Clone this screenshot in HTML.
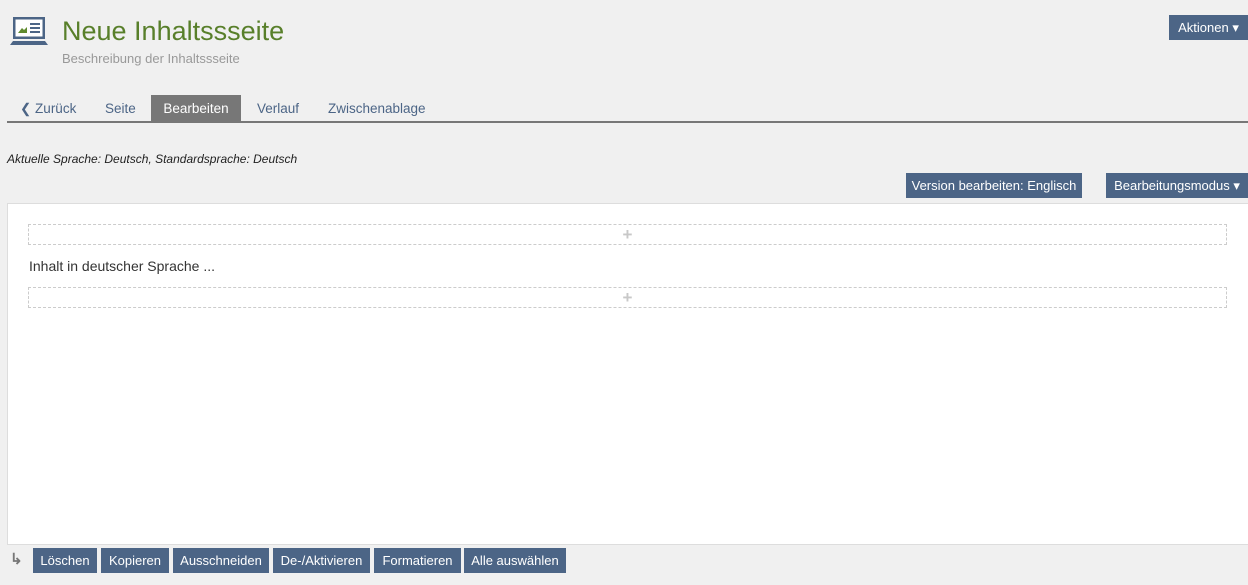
<!DOCTYPE html>
<html><head><meta charset="utf-8"><style>
body{margin:0;width:1248px;height:585px;background:#f0f0f0;font-family:"Liberation Sans",sans-serif;position:relative;overflow:hidden;font-size:13px}
.a{position:absolute}
.btn{position:absolute;background:#4c6586;color:#fff;font-size:13px;height:25px;line-height:25px;text-align:center;white-space:nowrap}
.tab{position:absolute;top:95px;height:27px;line-height:28px;color:#4c6586;font-size:13.5px}
.drop{position:absolute;left:28px;width:1197px;height:19px;border:1px dashed #ccc;color:#c8c8c8;text-align:center;line-height:20px;font-size:17px;font-weight:bold}
</style></head><body>
<svg class="a" style="left:10px;top:16px" width="40" height="30" viewBox="0 0 40 30">
<rect x="3" y="1" width="32" height="22" fill="#4c6586"/>
<rect x="5.5" y="3.5" width="27" height="17" fill="#fff"/>
<path d="M8 17 L12 12 L14 14 L17 11 L17 17Z" fill="#5f8a2d"/>
<rect x="20" y="7" width="10" height="2" fill="#4c6586"/><rect x="20" y="11" width="10" height="2" fill="#4c6586"/><rect x="20" y="15" width="10" height="2" fill="#4c6586"/>
<path d="M0 29 L3 25 L35 25 L38 29Z" fill="#4c6586"/>
</svg>
<div class="a" style="left:62px;top:16px;font-size:27px;color:#587f2a">Neue Inhaltssseite</div>
<div class="a" style="left:62px;top:51px;font-size:13px;color:#999">Beschreibung der Inhaltssseite</div>
<div class="btn" style="left:1169px;top:15px;width:79px">Aktionen ▾</div>
<div class="tab" style="left:20px">❮ Zurück</div>
<div class="tab" style="left:105px">Seite</div>
<div class="tab" style="left:151px;width:90px;background:#777;color:#fff;text-align:center">Bearbeiten</div>
<div class="tab" style="left:257px">Verlauf</div>
<div class="tab" style="left:328px">Zwischenablage</div>
<div class="a" style="left:7px;top:121px;width:1241px;height:2px;background:#777"></div>
<div class="a" style="left:7px;top:152px;font-style:italic;font-size:12px;color:#222">Aktuelle Sprache: Deutsch, Standardsprache: Deutsch</div>
<div class="btn" style="left:906px;top:173px;width:176px">Version bearbeiten: Englisch</div>
<div class="btn" style="left:1106px;top:173px;width:142px">Bearbeitungsmodus ▾</div>
<div class="a" style="left:7px;top:203px;width:1240px;height:340px;background:#fff;border:1px solid #ddd"></div>
<div class="drop" style="top:224px">+</div>
<div class="a" style="left:29px;top:258px;font-size:14px;color:#333">Inhalt in deutscher Sprache ...</div>
<div class="drop" style="top:287px">+</div>
<div class="a" style="left:10px;top:550px;color:#777;font-size:15px;font-weight:bold">↳</div>
<div class="btn" style="left:33px;top:548px;width:64px">Löschen</div>
<div class="btn" style="left:101px;top:548px;width:68px">Kopieren</div>
<div class="btn" style="left:173px;top:548px;width:96px">Ausschneiden</div>
<div class="btn" style="left:273px;top:548px;width:97px">De-/Aktivieren</div>
<div class="btn" style="left:374px;top:548px;width:87px">Formatieren</div>
<div class="btn" style="left:464px;top:548px;width:102px">Alle auswählen</div>
</body></html>
